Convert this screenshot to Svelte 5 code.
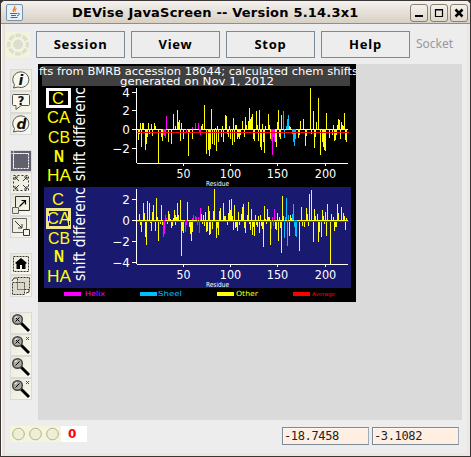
<script>
  const colors = { y: '#ffff00', m: '#ff00ff', c: '#00bfff' };

  // Each entry is "x:level" in thirds of a pixel, with an optional series letter.
  function bars(data, ox, oy, zero) {
    const base = oy + Math.floor(zero / 3);
    return data.trim().split(/\s+/).map((item) => {
      const [, x, level, key] = item.match(/^(\d+):(\d+)([mc]?)$/);
      const tip = oy + Math.round(+level / 3);
      return {
        x: ox + Math.floor(+x / 3),
        y: Math.min(base, tip),
        h: Math.max(1, Math.abs(base - tip)),
        fill: colors[key || 'y']
      };
    });
  }

  const top = [
    ...bars(`25:167 28:150 31:117 34:188 37:117 40:117 46:198 49:180 52:160 55:117 58:150 64:120 67:155 73:117 76:125 85:237 94:160 97:170 100:152m 103:155m 106:162m 109:96m 115:174 124:180 130:90 136:125 142:78 145:115 148:107 151:170 154:117 160:165 169:145m 175:215 178:145 187:165 187:130m 196:117m 205:117m 208:145m 211:153m 214:125 217:120 223:63 229:210 235:198 238:215 241:195 244:75 247:180 253:183 256:132 259:200 262:126 265:175 274:160 277:125 280:175 286:93 289:96 292:150 295:158 298:125 301:165 307:182 310:102 313:174 316:122 319:122 322:165 325:160 328:165 331:152 337:110`, 130, 84, 136),
    ...bars(`7:178 13:225 16:165 19:190 25:178 28:138 31:170 34:165 37:155 40:230 43:237 49:147 52:190 55:237 58:144 61:255 64:263 67:186 70:240 73:272 76:192 85:156 88:190 91:230 94:237m 97:278m 100:225m 103:237m 106:240 109:255 112:180 115:144 118:225 121:230 124:160 130:147c 133:227c 139:192c 142:172c 145:159c 148:192 151:195 154:200 157:215c 160:240c 163:252c 166:230c 175:227 178:220 181:177 190:171 196:251 199:222 211:78 214:215 220:147 223:258 226:225 229:180 235:108 241:278 247:240 250:255 253:263 256:266 259:153 268:227 277:220 280:190 283:237 286:234 289:220 292:190 295:171 298:174 301:230 304:180 307:190 310:192 313:153 316:234 319:240`, 240, 62, 202)
  ];

  const bottom = [
    ...bars(`28:90 31:122 34:143 40:57 43:87 46:160 49:182 52:51 58:57 61:117 64:140 67:84 70:63 76:140 79:42 82:100 85:170 91:120 94:63 97:122 100:158m 103:150m 106:93m 109:102m 112:120 115:80 118:90 121:105 124:132 127:125 130:102 133:78 136:93 136:122 139:100 142:57 145:93 151:48 154:215 157:140 160:147 166:143m 169:122m 172:54 178:130 181:150 184:170 187:143 187:102m 190:93m 196:96m 199:98m 202:122m 205:100m 208:147m 211:72m 214:90 217:120 220:93 223:125 226:84 229:143 232:140 235:66 238:152 238:82 241:150 247:135 250:82 253:15 259:162 262:132 265:152 268:80 271:72 280:57 283:96 286:96 292:122 295:87 298:48 301:78 304:45 307:96 310:138 313:63 316:132 319:130 322:140 325:84 328:122`, 130, 184, 109),
    ...bars(`4:90 7:69 10:60 13:132 16:147 22:93 25:54 28:120 31:137 34:75 37:153 40:128 43:156 46:93 49:122 52:128 55:96 58:147 61:93 64:125 67:135 70:188 73:66 76:105 79:120 82:75 85:100 88:98 91:182 94:135m 97:100m 100:125m 103:75m 106:135 109:137 112:87 115:170 118:100 121:132 124:206 127:36 130:96 133:162c 136:98c 139:42c 142:185c 145:93c 148:155 151:93 154:102 157:90c 160:60c 163:130c 166:156c 169:158c 178:200 184:69 187:125 193:128 199:72 202:90 205:125 208:30 214:18 220:173 223:75 226:96 232:90 235:173 238:143 244:160 247:78 250:96 253:120 256:84 259:155 262:60 271:240 274:90 280:100 283:140 286:128 289:130 292:60 295:88 304:69 310:88 313:96 316:137 319:102`, 240, 184, 109)
  ];

  const plots = [
    { bars: top, zero: 129, red: 132, y0: 88, axis: 163, ticks: [[4, 92], [2, 110], [0, 129], [-2, 148]] },
    { bars: bottom, zero: 220, red: 221, y0: 189, axis: 264, ticks: [[2, 199], [0, 220], [-2, 241], [-4, 262]] }
  ];
  const xticks = [[50, 183], [100, 230], [150, 277], [200, 325]];
  const atoms = [['C', 52, 12], ['CA', 47, 23], ['CB', 48, 22], ['N', 54, 10], ['HA', 47, 24]];
  const atomY = [[104, 123, 143, 162, 181], [205, 224, 244, 262, 282]];
  const legend = [['Helix', 64, 85, 20, '#ff00ff'], ['Sheel', 140, 158, 24, '#00bfff'], ['Other', 217, 236, 22, '#ffff00'], ['Average', 293, 312, 23, '#ff0000']];
  const groups = [['info', 'help', 'debug'], ['select', 'expand', 'grow', 'shrink'], ['home', 'swap'], ['zx', 'zxx', 'zy', 'zyx']];
  const menus = ['Session', 'View', 'Stop', 'Help'];
</script>

<div class="window">
  <header>
    <svg class="java" width="17" height="17" viewBox="0 0 17 17">
      <rect x=".5" y=".5" width="16" height="16" rx="1.5" fill="#e9f0f5" stroke="#7493ad" />
      <path d="M8.5 2c2 2-3 3-1 6M10.5 4.5c-2 1-2 2-1 3" fill="none" stroke="#ef7916" stroke-width="1.3" />
      <path d="M4 9.5h7M5 11.5h5M4.5 13.5h7M11.5 9.5c3-.8 2 2-.5 2.3" fill="none" stroke="#3e6c91" />
    </svg>
    <h1>DEVise JavaScreen -- Version 5.14.3x1</h1>
    <div class="controls">
      <button aria-label="Minimize"><svg width="18" height="18"><path d="M5 12h8" stroke="#000" stroke-width="2" /></svg></button>
      <button aria-label="Maximize"><svg width="18" height="18"><path d="M5.500 5.500h7v7h-7zM5 6h8" fill="none" stroke="#000" stroke-width="1.2" /></svg></button>
      <button aria-label="Close"><svg width="18" height="18"><path d="M5.500 5.500l7 7M12.500 5.500l-7 7" stroke="#000" stroke-width="2.5" /></svg></button>
    </div>
  </header>

  <nav>
    <svg class="wheel" width="24" height="25" viewBox="0 0 24 25">
      <rect width="24" height="25" fill="#f4f4dc" />
      <circle cx="12" cy="12.5" r="9.3" fill="none" stroke="#deded0" stroke-width="3.6" stroke-dasharray="5.8 1.5" stroke-dashoffset="2.9" />
      <circle cx="12" cy="12.5" r="5" fill="#deded0" />
    </svg>
    {#each menus as menu}<button class="menu"><span>{menu}</span></button>{/each}
    <span class="socket">Socket</span>
  </nav>

  <main>
    <aside>
      {#each groups as group}
        <div class="group">
          {#each group as icon}
            <button class="tool" class:pressed={icon === 'select'} aria-label={icon}>
              <svg width="20" height="20" viewBox="0 0 20 20" fill="none" stroke="#333">
                {#if icon === 'info' || icon === 'debug'}
                  <path d="M3.5 14.5A8 7.8 0 1 1 7 17l-4.5 1z" fill="#f8f8ee" stroke="#555" />
                  <text x={icon === 'info' ? 7.5 : 5.5} y="14.5" class="glyph">{icon === 'info' ? 'i' : 'd'}</text>
                {:else if icon === 'help'}
                  <path d="M2.5 2.5h15q1 0 1 1v9q0 1-1 1h-7.500l-5 4v-4H2.500q-1 0-1-1v-9q0-1 1-1z" fill="#f8f8ee" stroke="#555" />
                  <text x="6.500" y="12.500" class="glyph upright">?</text>
                {:else if icon === 'select'}
                  <path d="M2.500 0v18M0 2.500h18" stroke="#bbc" />
                  <path d="M2.500 2.500h15v15h-15z" stroke="#fff" stroke-dasharray="2 1" />
                {:else if icon === 'expand'}
                  <path d="M2.500 2.500h15v15h-15z" stroke-dasharray="2 2" />
                  <path d="M8 8L4 4m0 3V4h3M12 8l4-4m-3 0h3v3M8 12l-4 4m0-3v3h3M12 12l4 4m-3 0h3v-3" />
                {:else if icon === 'grow'}
                  <path d="M4.500 1.500h14v14h-14z" />
                  <path d="M1.500 12.500h6v6h-6z" fill="#e8e8dc" stroke="#666" />
                  <path d="M8.500 11.500l6-6m-4 0h4v4" stroke="#000" stroke-width="1.2" />
                {:else if icon === 'shrink'}
                  <path d="M1.500 1.500h14v14h-14z" stroke="#666" />
                  <path d="M12.500 12.500h6v6h-6z" fill="#f4f4ea" />
                  <path d="M4 4l7 7m-4 0h4V7" />
                {:else if icon === 'home'}
                  <path d="M2.500 2.500h15v15h-15z" stroke-dasharray="2 1" />
                  <path d="M10 4l6 5-1.500 1v5h-3.500v-4H9v4H5.500v-5L4 9z" fill="#000" stroke="none" />
                {:else if icon === 'swap'}
                  <path d="M1.500 6.500h12v12h-12zM6.500 1.500h12v12h-12z" fill="#dddacb" stroke-dasharray="2 1" />
                  <path d="M6.500 6.500h7v7h-7z" stroke="#777" stroke-dasharray="2 1" />
                  <path d="M1 5l2-3h3M15 17l3-1v-2" />
                {:else}
                  <path d="M10 10l8 8" stroke="#000" stroke-width="3" />
                  <circle cx="6.500" cy="6.500" r="4.800" fill="#aaa99d" stroke="#444" stroke-width="1.500" />
                  <path d={icon[1] === 'x' ? 'M4.500 4.500l4 4m0-4l-4 4' : 'M4.500 8.500l4-4'} stroke="#000" />
                  <path d="M4 5l2-1.500" stroke="#fff" />
                  {#if icon.length === 3}<path d="M15 2l3 3m0-3l-3 3" stroke="#555" />{/if}
                {/if}
              </svg>
            </button>
          {/each}
        </div>
      {/each}
    </aside>

    <section class="canvas">
      <svg width="318" height="238" viewBox="38 64 318 238" shape-rendering="crispEdges">
        <defs>
          <clipPath id="l0"><rect x="73" y="87" width="17" height="100" /></clipPath>
          <clipPath id="l1"><rect x="73" y="187" width="17" height="100" /></clipPath>
          <clipPath id="x0"><rect x="205" y="181" width="26" height="5" /></clipPath>
          <clipPath id="x1"><rect x="205" y="282" width="26" height="5" /></clipPath>
        </defs>
        <rect x="38" y="64" width="318" height="238" fill="#000" />
        <rect x="42" y="66" width="308" height="20" fill="#404040" />
        <rect x="44" y="187" width="307" height="101" fill="#191970" />
        <g class="plot">
          <text x="39" y="75" font-size="11" textLength="319" lengthAdjust="spacingAndGlyphs">fts from BMRB accession 18044; calculated chem shifts</text>
          <text x="120" y="85" font-size="11" textLength="154" lengthAdjust="spacingAndGlyphs">generated on Nov 1, 2012</text>
        </g>
        <rect x="47.500" y="89.500" width="22" height="17" fill="none" stroke="#fff" stroke-width="3" />
        <rect x="47.500" y="209.500" width="22" height="18" fill="none" stroke="#f0e68c" stroke-width="3" />
        {#each plots as plot, p}
          {#each atoms as atom, i}
            <text class="atom" x={atom[1]} y={atomY[p][i]} textLength={atom[2]} lengthAdjust="spacingAndGlyphs" font-weight={atom[0] === 'N' ? 700 : 400}>{atom[0]}</text>
          {/each}
          <g clip-path={`url(#l${p})`}>
            <text class="plot" transform={`translate(85 ${p ? 281 : 181}) rotate(-90)`} font-size="16" textLength="102" lengthAdjust="spacingAndGlyphs">shift difference</text>
          </g>
          <rect x="136" y={plot.y0} width="1" height={plot.axis - plot.y0} fill="#fff" />
          <rect x="137" y={plot.axis} width="211" height="1" fill="#fff" />
          {#each plot.ticks as [label, y]}
            <rect x="132" {y} width="4" height="1" fill="#fff" />
            <text class="plot" x="130" y={y + 5} text-anchor="end" font-size="12">{label < 0 ? '−' + -label : label}</text>
          {/each}
          {#each xticks as [label, x]}
            <rect {x} y={plot.axis} width="1" height="3" fill="#fff" />
            <text class="plot" x={x + .5} y={plot.axis + 15} text-anchor="middle" font-size="12" textLength={label > 50 ? 21.500 : 14} lengthAdjust="spacingAndGlyphs">{label}</text>
          {/each}
          <rect x="137" y={plot.zero} width="211" height="1" fill={p ? '#ffff00' : '#fff'} />
          {#each plot.bars as bar}<rect x={bar.x} y={bar.y} width="1" height={bar.h} fill={bar.fill} />{/each}
          <rect x="137" y={plot.red} width="212" height="1" fill="#f00" />
          <g clip-path={`url(#x${p})`}><text class="plot" x="206" y={p ? 287 : 186} font-size="7" textLength="23" lengthAdjust="spacingAndGlyphs">Residue</text></g>
        {/each}
        <path d="M48.500 216v5M69.500 221v4" stroke="#00f" />
        {#each legend as [name, x, tx, width, fill]}
          <rect {x} y="292" width="17" height="4" {fill} />
          <text class="key" x={tx} y="296" {fill} font-size={name === 'Average' ? 5.500 : 7} textLength={width} lengthAdjust="spacingAndGlyphs">{name}</text>
        {/each}
      </svg>
    </section>
  </main>

  <footer>
    <div class="lights">
      <svg width="51" height="16" viewBox="0 0 51 16">
        <rect width="51" height="16" fill="#f5f5dc" />
        {#each [8.500, 25.500, 42.500] as cx}<circle {cx} cy="8" r="5.800" fill="#efefd5" stroke="#b1b19c" />{/each}
      </svg>
      <b>0</b>
    </div>
    <div class="fields"><span class="field">-18.7458</span><span class="field">-3.1082</span></div>
  </footer>
</div>

<style>
  :global(body) { background: #332f2e; }
  .window {
    box-sizing: border-box; width: 471px; height: 457px; overflow: hidden;
    border: 1px solid #3b3535; border-radius: 5px 5px 0 0; background: #ededed;
    box-shadow: inset 1px 0 #fff, inset 3px 0 #ede6df, inset 4px 0 #e7dfd9, inset -3px -3px #ece8df;
    display: flex; flex-direction: column;
  }
  button { font: inherit; margin: 0; padding: 0; }
  header {
    box-sizing: border-box; height: 23px; flex: none; display: flex; align-items: center; padding: 0 2px 0 5px;
    background: linear-gradient(#f5f3ef, #e9e5df 35%, #d8d0c4); border-bottom: 1px solid #968d7e; border-radius: 4px 4px 0 0;
  }
  .java { margin-top: 1px; }
  h1 { margin: 2px 0 0 49px; width: 300px; font: bold 13px/16px "DejaVu Sans", sans-serif; letter-spacing: .2px; white-space: nowrap; }
  .controls { display: flex; gap: 2px; margin: 1px 0 0 auto; }
  .controls button { box-sizing: border-box; width: 18px; height: 18px; border: 1px solid #8c8170; border-radius: 3px; background: linear-gradient(#f4f1ec, #ded7cc); }
  .controls svg { display: block; margin: -1px; }
  nav { display: flex; align-items: center; gap: 6px; padding: 6px 0 0 5px; height: 28px; flex: none; }
  .menu { box-sizing: border-box; width: 89px; height: 27px; border: 1px solid #7a8a99; background: #ededed; font: bold 13px/24px "Noto Sans", sans-serif; letter-spacing: .75px; color: #000; }
  .socket { font: 12px/24px "Noto Sans", sans-serif; color: #999; letter-spacing: 0; }
  main { display: flex; margin-top: 6px; padding: 0 8px 0 9px; height: 356px; flex: none; box-sizing: border-box; }
  aside { width: 28px; flex: none; padding-top: 5px; display: flex; flex-direction: column; gap: 15px; }
  .group { display: flex; flex-direction: column; }
  .tool { width: 22px; height: 22px; box-sizing: border-box; border: 1px solid #dadada; background: linear-gradient(135deg, #e7e6d5, #faf9f0); }
  .tool svg { display: block; }
  .pressed { background: #60606f; }
  .glyph { font: italic bold 14px "DejaVu Sans", sans-serif; fill: #111; stroke: none; }
  .upright { font-size: 12px; font-style: normal; }
  .canvas { flex: 1; background: #dadada; }
  .canvas svg { display: block; }
  .plot, .plot text { font-family: "DejaVu Sans", sans-serif; fill: #fff; }
  .key { font-family: "DejaVu Sans", sans-serif; }
  .atom { font-family: "Liberation Sans", sans-serif; font-size: 17px; fill: #ff0; }
  footer { display: flex; justify-content: space-between; padding: 6px 11px 0 9px; }
  .lights { display: flex; height: 16px; width: 77px; background: #fff; }
  .lights b { margin-left: 7px; color: #f00; font: bold 12px/16px "DejaVu Sans", sans-serif; }
  .fields { display: flex; gap: 3px; padding-top: 1px; }
  .field { box-sizing: border-box; width: 87px; height: 18px; border: 1px solid #7a8a99; border-right-color: #9eabb5; background: #ffefe3; box-shadow: inset 1px 1px #fff8f0; padding-left: 1px; font: 12px/17px "DejaVu Sans Mono", monospace; letter-spacing: -.35px; color: #222; }
</style>
